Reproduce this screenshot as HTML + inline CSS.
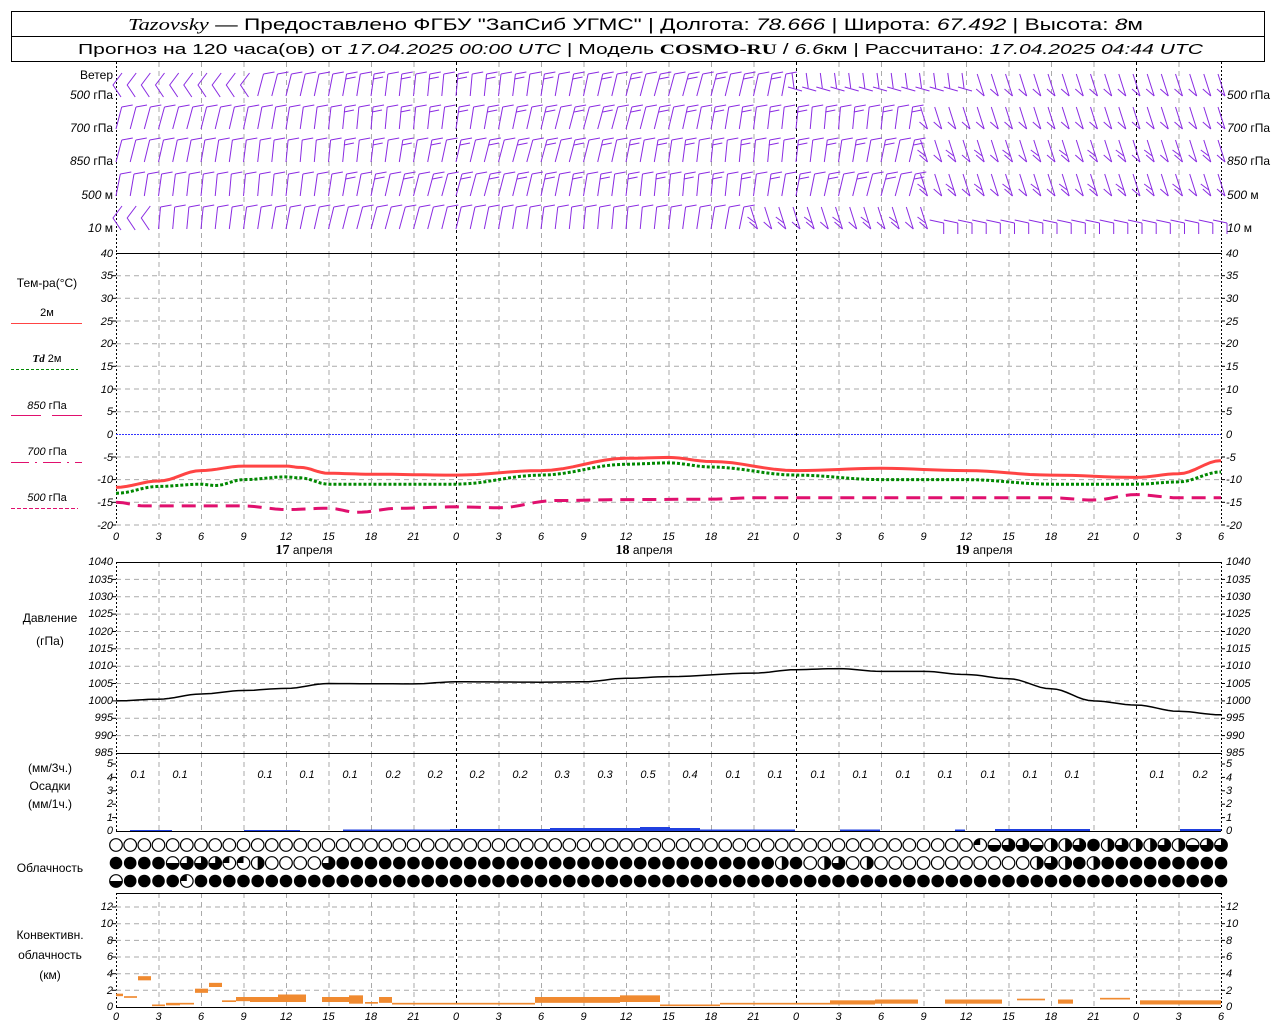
<!DOCTYPE html>
<html><head><meta charset="utf-8"><style>
html,body{margin:0;padding:0;background:#fff;width:1280px;height:1024px;overflow:hidden}
svg{display:block;font-family:"Liberation Sans",sans-serif}
.t{font-size:11px;font-style:italic}
.l{font-size:12px}
</style></head><body>
<svg id="s" width="1280" height="1024" xmlns="http://www.w3.org/2000/svg">
<g id="g"></g>
<rect x="11.5" y="11.5" width="1253" height="50" fill="none" stroke="#000"/>
<line x1="11" y1="36.5" x2="1264" y2="36.5" stroke="#000"/>
<text x="128" y="30" font-size="17" textLength="1015" lengthAdjust="spacingAndGlyphs"><tspan font-family="Liberation Serif" font-style="italic">Tazovsky</tspan> — Предоставлено ФГБУ "ЗапСиб УГМС" | Долгота: <tspan font-style="italic">78.666</tspan> | Широта: <tspan font-style="italic">67.492</tspan> | Высота: <tspan font-style="italic">8</tspan>м</text>
<text x="78" y="54" font-size="15" textLength="1125" lengthAdjust="spacingAndGlyphs">Прогноз на 120 часа(ов) от <tspan font-style="italic">17.04.2025 00:00 UTC</tspan>  | Модель <tspan font-family="Liberation Serif" font-weight="bold">COSMO-RU</tspan> / <tspan font-style="italic">6.6</tspan>км | Рассчитано: <tspan font-style="italic">17.04.2025 04:44 UTC</tspan></text>

<g class="l" text-anchor="end">
<text x="113" y="79">Ветер</text>
<text x="113" y="99"><tspan font-style="italic">500</tspan> гПа</text>
<text x="113" y="132"><tspan font-style="italic">700</tspan> гПа</text>
<text x="113" y="165"><tspan font-style="italic">850</tspan> гПа</text>
<text x="113" y="199"><tspan font-style="italic">500</tspan> м</text>
<text x="113" y="232"><tspan font-style="italic">10</tspan>  м</text>
</g>
<g class="l">
<text x="1227" y="99"><tspan font-style="italic">500</tspan> гПа</text>
<text x="1227" y="132"><tspan font-style="italic">700</tspan> гПа</text>
<text x="1227" y="165"><tspan font-style="italic">850</tspan> гПа</text>
<text x="1227" y="199"><tspan font-style="italic">500</tspan> м</text>
<text x="1227" y="232"><tspan font-style="italic">10</tspan>  м</text>
</g>

<g class="l" text-anchor="middle">
<text x="47" y="287">Тем-ра(°C)</text>
<text x="47" y="316" font-size="11">2м</text>
<text x="47" y="362" font-size="11"><tspan font-style="italic" font-weight="bold" font-family="Liberation Serif">Td</tspan>  2м</text>
<text x="47" y="409" font-size="11"><tspan font-style="italic">850</tspan> гПа</text>
<text x="47" y="455" font-size="11"><tspan font-style="italic">700</tspan> гПа</text>
<text x="47" y="501" font-size="11"><tspan font-style="italic">500</tspan> гПа</text>
<text x="50" y="622">Давление</text>
<text x="50" y="645">(гПа)</text>
<text x="50" y="772">(мм/3ч.)</text>
<text x="50" y="790">Осадки</text>
<text x="50" y="808">(мм/1ч.)</text>
<text x="50" y="872">Облачность</text>
<text x="50" y="939">Конвективн.</text>
<text x="50" y="959">облачность</text>
<text x="50" y="979">(км)</text>
</g>

<g class="t" text-anchor="end" font-size="10">
<text x="113" y="257">40</text><text x="113" y="279">35</text><text x="113" y="302">30</text><text x="113" y="325">25</text><text x="113" y="347">20</text><text x="113" y="370">15</text><text x="113" y="393">10</text><text x="113" y="415">5</text><text x="113" y="438">0</text><text x="113" y="461">-5</text><text x="113" y="483">-10</text><text x="113" y="506">-15</text><text x="113" y="529">-20</text>
<text x="113" y="565">1040</text><text x="113" y="583">1035</text><text x="113" y="600">1030</text><text x="113" y="617">1025</text><text x="113" y="635">1020</text><text x="113" y="652">1015</text><text x="113" y="669">1010</text><text x="113" y="687">1005</text><text x="113" y="704">1000</text><text x="113" y="721">995</text><text x="113" y="739">990</text><text x="113" y="756">985</text>
<text x="113" y="767">5</text><text x="113" y="781">4</text><text x="113" y="794">3</text><text x="113" y="807">2</text><text x="113" y="821">1</text><text x="113" y="834">0</text>
<text x="113" y="910">12</text><text x="113" y="927">10</text><text x="113" y="944">8</text><text x="113" y="960">6</text><text x="113" y="977">4</text><text x="113" y="994">2</text><text x="113" y="1010">0</text>
</g>
<g class="t" font-size="10">
<text x="1226" y="257">40</text><text x="1226" y="279">35</text><text x="1226" y="302">30</text><text x="1226" y="325">25</text><text x="1226" y="347">20</text><text x="1226" y="370">15</text><text x="1226" y="393">10</text><text x="1226" y="415">5</text><text x="1226" y="438">0</text><text x="1226" y="461">-5</text><text x="1226" y="483">-10</text><text x="1226" y="506">-15</text><text x="1226" y="529">-20</text>
<text x="1226" y="565">1040</text><text x="1226" y="583">1035</text><text x="1226" y="600">1030</text><text x="1226" y="617">1025</text><text x="1226" y="635">1020</text><text x="1226" y="652">1015</text><text x="1226" y="669">1010</text><text x="1226" y="687">1005</text><text x="1226" y="704">1000</text><text x="1226" y="721">995</text><text x="1226" y="739">990</text><text x="1226" y="756">985</text>
<text x="1226" y="767">5</text><text x="1226" y="781">4</text><text x="1226" y="794">3</text><text x="1226" y="807">2</text><text x="1226" y="821">1</text><text x="1226" y="834">0</text>
<text x="1226" y="910">12</text><text x="1226" y="927">10</text><text x="1226" y="944">8</text><text x="1226" y="960">6</text><text x="1226" y="977">4</text><text x="1226" y="994">2</text><text x="1226" y="1010">0</text>
</g>

<g class="t" font-size="14" text-anchor="middle">
<text x="116" y="540">0</text><text x="158.5" y="540">3</text><text x="201" y="540">6</text><text x="243.5" y="540">9</text><text x="286" y="540">12</text><text x="328.5" y="540">15</text><text x="371" y="540">18</text><text x="413.5" y="540">21</text><text x="456" y="540">0</text><text x="498.5" y="540">3</text><text x="541" y="540">6</text><text x="583.5" y="540">9</text><text x="626" y="540">12</text><text x="668.5" y="540">15</text><text x="711" y="540">18</text><text x="753.5" y="540">21</text><text x="796" y="540">0</text><text x="838.5" y="540">3</text><text x="881" y="540">6</text><text x="923.5" y="540">9</text><text x="966" y="540">12</text><text x="1008.5" y="540">15</text><text x="1051" y="540">18</text><text x="1093.5" y="540">21</text><text x="1136" y="540">0</text><text x="1178.5" y="540">3</text><text x="1221" y="540">6</text>
<text x="116" y="1020">0</text><text x="158.5" y="1020">3</text><text x="201" y="1020">6</text><text x="243.5" y="1020">9</text><text x="286" y="1020">12</text><text x="328.5" y="1020">15</text><text x="371" y="1020">18</text><text x="413.5" y="1020">21</text><text x="456" y="1020">0</text><text x="498.5" y="1020">3</text><text x="541" y="1020">6</text><text x="583.5" y="1020">9</text><text x="626" y="1020">12</text><text x="668.5" y="1020">15</text><text x="711" y="1020">18</text><text x="753.5" y="1020">21</text><text x="796" y="1020">0</text><text x="838.5" y="1020">3</text><text x="881" y="1020">6</text><text x="923.5" y="1020">9</text><text x="966" y="1020">12</text><text x="1008.5" y="1020">15</text><text x="1051" y="1020">18</text><text x="1093.5" y="1020">21</text><text x="1136" y="1020">0</text><text x="1178.5" y="1020">3</text><text x="1221" y="1020">6</text>
</g>
<g class="l" text-anchor="middle" font-size="13">
<text x="304" y="554"><tspan font-family="Liberation Serif" font-weight="bold" font-size="14">17</tspan> апреля</text>
<text x="644" y="554"><tspan font-family="Liberation Serif" font-weight="bold" font-size="14">18</tspan> апреля</text>
<text x="984" y="554"><tspan font-family="Liberation Serif" font-weight="bold" font-size="14">19</tspan> апреля</text>
</g>
<g class="t" font-size="13" text-anchor="middle">
<text x="138" y="778">0.1</text><text x="180" y="778">0.1</text><text x="265" y="778">0.1</text><text x="307" y="778">0.1</text><text x="350" y="778">0.1</text><text x="393" y="778">0.2</text><text x="435" y="778">0.2</text><text x="477" y="778">0.2</text><text x="520" y="778">0.2</text><text x="562" y="778">0.3</text><text x="605" y="778">0.3</text><text x="648" y="778">0.5</text><text x="690" y="778">0.4</text><text x="733" y="778">0.1</text><text x="775" y="778">0.1</text><text x="818" y="778">0.1</text><text x="860" y="778">0.1</text><text x="903" y="778">0.1</text><text x="945" y="778">0.1</text><text x="988" y="778">0.1</text><text x="1030" y="778">0.1</text><text x="1072" y="778">0.1</text><text x="1157" y="778">0.1</text><text x="1200" y="778">0.2</text>
</g>
</svg>
<script>
var g=document.getElementById('g'),h='';
function X(t){return 116+t*14.1667}
function f1(v){return (+v).toFixed(1)}
function L(a,b,c,d,s,w,da){h+='<line x1="'+f1(a)+'" y1="'+f1(b)+'" x2="'+f1(c)+'" y2="'+f1(d)+'" stroke="'+s+'" stroke-width="'+(w||1)+'"'+(da?' stroke-dasharray="'+da+'"':'')+'/>';}
function R(x,y,w,hh,f){h+='<rect x="'+x+'" y="'+y+'" width="'+w+'" height="'+hh+'" fill="'+f+'"/>';}
var secs=[[62,253],[253,525],[562,753],[753,831],[893,1007]];
secs.forEach(function(s){for(var i=0;i<=26;i++){var x=116+i*42.5;var mid=(i%8==0);
 if(i==0){L(116.5,s[0],116.5,s[1],'#000',1,'2,2');continue}
 if(i==26){L(1221.5,s[0],1221.5,s[1],'#000',1,'2,2');continue}
 L(x+.5,s[0],x+.5,s[1],mid?'#000':'#aaa',1,mid?'3,3':'5,4');}});
for(var t=35;t>=-20;t-=5){var y=253+(40-t)*4.533;if(t==0)continue;L(116,y,1221,y,'#aaa',1,'5,4');L(112,y,116,y,'#000');L(1221,y,1225,y,'#000');}
L(116,434.5,1221,434.5,'#33f',1,'2,1');
for(var p=1035;p>985;p-=5){var y=562+(1040-p)*3.4727;L(116,y,1221,y,'#aaa',1,'5,4');L(112,y,116,y,'#000');L(1221,y,1225,y,'#000');}
for(var k=2;k<=12;k+=2){var y=1007-k*8.33;L(116,y,1221,y,'#aaa',1,'5,4');L(112,y,116,y,'#000');L(1221,y,1225,y,'#000');}
for(var v=1;v<=5;v++){var y=831-v*13.4;L(112,y,116,y,'#000');L(1221,y,1225,y,'#000');}
L(116,253.5,1221,253.5,'#000');L(116,562.5,1221,562.5,'#000');L(116,753.5,1221,753.5,'#000');L(116,831.5,1221,831.5,'#000');L(116,893.5,1221,893.5,'#000');L(116,1007.5,1221,1007.5,'#000');
L(11,323.5,82,323.5,'#f44');L(11,369.5,78,369.5,'#080',1,'3,2');L(11,415.5,41,415.5,'#e0106e');L(52,415.5,82,415.5,'#e0106e');
L(11,462.5,82,462.5,'#e0106e',1,'18,6,2,6');L(11,508.5,78,508.5,'#e0106e',1,'4,2');
function poly(d,fy,col,w,da){var pts=[],i;for(i=0;i<d.length-1;i++){var a=d[i],b=d[i+1];for(var s=0;s<8;s++){var f=s/8,m=(1-Math.cos(f*Math.PI))/2;pts.push(X(a[0]+(b[0]-a[0])*f).toFixed(1)+','+fy(a[1]+(b[1]-a[1])*m).toFixed(1));}}
var e=d[d.length-1];pts.push(X(e[0])+','+fy(e[1]));h+='<polyline points="'+pts.join(' ')+'" fill="none" stroke="'+col+'" stroke-width="'+w+'"'+(da?' stroke-dasharray="'+da+'"':'')+'/>';}
function TY(t){return 253+(40-t)*4.533}
poly([[0,-11.7],[3,-10.3],[6,-8],[9,-7],[12,-7],[13,-7.3],[15,-8.6],[18,-8.8],[24,-9],[30,-8],[36,-5.3],[39,-5.1],[42,-6],[48,-8],[54,-7.5],[60,-8],[66,-9],[72,-9.5],[75,-8.7],[78,-5.8]],TY,'#f44',3);
poly([[0,-13],[3,-11.5],[6,-11],[7,-11.3],[9,-10],[12,-9.4],[13,-9.6],[15,-11],[24,-11],[30,-9],[36,-6.6],[39,-6.3],[42,-7.2],[48,-9],[54,-10],[60,-10],[66,-11],[72,-11],[75,-10.5],[78,-8.3]],TY,'#080',3,'3,2');
poly([[0,-15],[2,-15.8],[9,-15.8],[12,-16.6],[15,-16.3],[17,-17.2],[20,-16.3],[24,-16],[27,-16.2],[31,-14.6],[36,-14.4],[42,-14.3],[45,-14],[54,-14],[66,-14],[69,-14.5],[72,-13.3],[75,-14],[78,-14]],TY,'#e0106e',3,'14,8');
function PY(p){return 562+(1040-p)*3.4727}
poly([[0,1000],[3,1000.5],[6,1002],[9,1003],[12,1003.6],[15,1005],[21,1004.9],[24,1005.5],[30,1005.4],[33,1005.5],[36,1006.5],[39,1007],[45,1008],[48,1009],[51,1009.3],[54,1008.5],[57,1008.5],[60,1007.6],[63,1006.4],[66,1003.5],[69,1000],[72,998.8],[75,997],[78,996]],PY,'#000',1.5);
[[130,172,1],[244,300,1],[343,450,1.5],[450,550,2],[550,630,3],[630,650,3],[640,670,4],[670,700,3],[700,795,1.5],[840,880,1.5],[955,965,1.5],[995,1090,2],[1180,1221,2]].forEach(function(b){R(b[0],831-b[2],b[1]-b[0],b[2],'#2040e0')});
function KY(k){return 1007-k*8.33}
[[116,123,1.3,1.6],[124,137,1.1,1.3],[138,151,3.2,3.7],[152,165,0.1,0.3],[166,180,0.2,0.5],[180,194,0.3,0.5],[195,208,1.7,2.2],[209,222,2.4,2.9],[222,236,0.6,0.8],[236,250,0.7,1.2],[250,278,0.6,1.2],[278,306,0.6,1.5],[322,349,0.6,1.2],[349,363,0.4,1.4],[365,378,0.4,0.6],[379,392,0.5,1.2],[392,456,0.3,0.5],[456,535,0.3,0.5],[535,620,0.5,1.2],[620,660,0.6,1.4],[660,720,0.1,0.3],[720,830,0.3,0.5],[830,875,0.3,0.8],[875,918,0.4,0.9],[945,1002,0.4,0.9],[1017,1045,0.8,1.0],[1058,1073,0.4,0.9],[1100,1130,0.9,1.1],[1140,1221,0.3,0.8]].forEach(function(b){R(b[0],KY(b[3]),b[1]-b[0],KY(b[2])-KY(b[3]),'#f08a30')});
function row(str){var a=[];for(var i=0;i<79;i++)a.push(str[i]||str[str.length-1]);return a}
var r1='o'.repeat(61)+'lhqqhvvqbvqvvqvhqq';
var r2='bbbbhqqqllvoooo'+'q'+'b'.repeat(31)+'vbovqovooo'+'o'.repeat(8)+'vqvbv'+'b'.repeat(9);
var r3='hbbbbl'+'b'.repeat(73);
function cir(cx,cy,c){var r=6.3;cx=+cx;cy=+cy;
 var A=f1(cx-r),B=f1(cx+r),C=f1(cx),T=f1(cy-r),Bo=f1(cy+r),M=f1(cy);
 if(c=='b'){h+='<circle cx="'+C+'" cy="'+M+'" r="'+r+'" fill="#000"/>';return}
 h+='<circle cx="'+C+'" cy="'+M+'" r="'+r+'" fill="#fff" stroke="#000" stroke-width="1.2"/>';
 if(c=='h')h+='<path d="M'+A+' '+M+'A'+r+' '+r+' 0 0 0 '+B+' '+M+'Z" fill="#000"/>';
 if(c=='q')h+='<path d="M'+C+' '+M+'L'+C+' '+T+'A'+r+' '+r+' 0 1 1 '+A+' '+M+'Z" fill="#000"/>';
 if(c=='l')h+='<path d="M'+C+' '+M+'L'+C+' '+T+'A'+r+' '+r+' 0 0 0 '+A+' '+M+'Z" fill="#000"/>';
 if(c=='v')h+='<path d="M'+C+' '+T+'A'+r+' '+r+' 0 0 1 '+C+' '+Bo+'Z" fill="#000"/>';}
[[r1,845],[r2,863],[r3,881]].forEach(function(q){var a=row(q[0]);for(var i=0;i<79;i++)cir(X(i),q[1],a[i])});
var rows=[85,118,151,185,218],col='#8a2be2';
for(var r=0;r<5;r++)for(var i=0;i<79;i++){
 var x=X(i),y=rows[r];
 if((r==0&&i<10)||(r==4&&i<3)){h+='<polyline points="'+f1(x+6)+','+f1(y-12)+' '+f1(x-3)+','+f1(y)+' '+f1(x+5)+','+f1(y+12)+'" fill="none" stroke="'+col+'"/>';continue;}
 var late=(r==0&&i>60)||(r>0&&r<4&&i>56)||(r==4&&i>44&&i<58);
 if(r==4&&i>=58){L(x-8,y+2,x+6,y+5,col);L(x+6,y+5,x+6,y+16,col);continue;}
 if(r==0&&i>=48&&i<=60){L(x-8,y+2,x+6,y+6,col);L(x-4,y-12,x-2,y+3,col);continue;}
 if(late){L(x-3,y-11,x+4,y+11,col);L(x+4,y+11,x-4,y+4,col);if(i%2&&r>1)L(x+2,y+5,x-6,y-1,col);continue;}
 var s=Math.sin(i/5+r)*2;
 L(x,y+11,x+4+s,y-11,col);L(x+4+s,y-11,x+15+s,y-13,col);
 if(i>15&&r<4&&i%2==0)L(x+3+s,y-6,x+13+s,y-8,col);
}
g.innerHTML=h;
</script>
</body></html>
